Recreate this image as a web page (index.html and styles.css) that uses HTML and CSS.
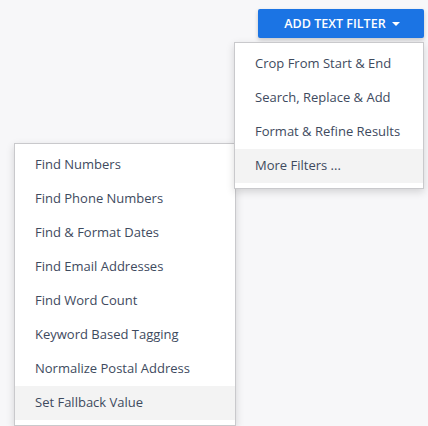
FILE: index.html
```html
<!DOCTYPE html>
<html>
<head>
<meta charset="utf-8">
<link rel="stylesheet" href="styles.css">
</head>
<body>
<div class="toolbar">
  <button class="btn">ADD TEXT FILTER<span class="caret"></span></button>
  <ul class="menu menu-main">
    <li class="item">Crop From Start &amp; End</li>
    <li class="item">Search, Replace &amp; Add</li>
    <li class="item">Format &amp; Refine Results</li>
    <li class="item active">More Filters ...</li>
  </ul>
  <ul class="menu menu-sub">
    <li class="item">Find Numbers</li>
    <li class="item">Find Phone Numbers</li>
    <li class="item">Find &amp; Format Dates</li>
    <li class="item">Find Email Addresses</li>
    <li class="item">Find Word Count</li>
    <li class="item">Keyword Based Tagging</li>
    <li class="item">Normalize Postal Address</li>
    <li class="item active">Set Fallback Value</li>
  </ul>
</div>
</body>
</html>
```
FILE: styles.css
```css
html, body {
  margin: 0;
  padding: 0;
  background: #f7f7f9;
  font-family: "Open Sans", "Noto Sans", sans-serif;
  overflow: hidden;
  height: 426px;
}
.toolbar {
  position: relative;
  display: flex;
  justify-content: flex-end;
  padding: 9px 4px 0 0;
}
.btn {
  width: 166px;
  height: 29px;
  border: none;
  border-radius: 2px;
  background: #1b74e4;
  color: #fff;
  font-family: inherit;
  font-size: 12.5px;
  font-weight: 600;
  display: flex;
  align-items: center;
  justify-content: center;
  gap: 6px;
  padding: 0 0 0 2px;
  box-shadow: 0 2px 4px rgba(0,0,0,0.2);
}
.caret {
  width: 0;
  height: 0;
  border-left: 4px solid transparent;
  border-right: 4px solid transparent;
  border-top: 4px solid #fff;
}
.menu {
  position: absolute;
  list-style: none;
  margin: 0;
  padding: 4px 0 5px;
  background: #fff;
  border: 1px solid #c9c9cc;
  box-shadow: 0 3px 8px rgba(0,0,0,0.15);
  box-sizing: border-box;
}
.menu-main {
  top: 42px;
  left: 234px;
  width: 190px;
  z-index: 2;
}
.menu-sub {
  top: 143px;
  left: 14px;
  width: 222px;
  z-index: 1;
}
.item {
  height: 34px;
  line-height: 33px;
  padding-left: 20px;
  font-size: 13px;
  color: #3e4a5e;
  white-space: nowrap;
}
.item.active {
  background: #f3f3f3;
}
```
